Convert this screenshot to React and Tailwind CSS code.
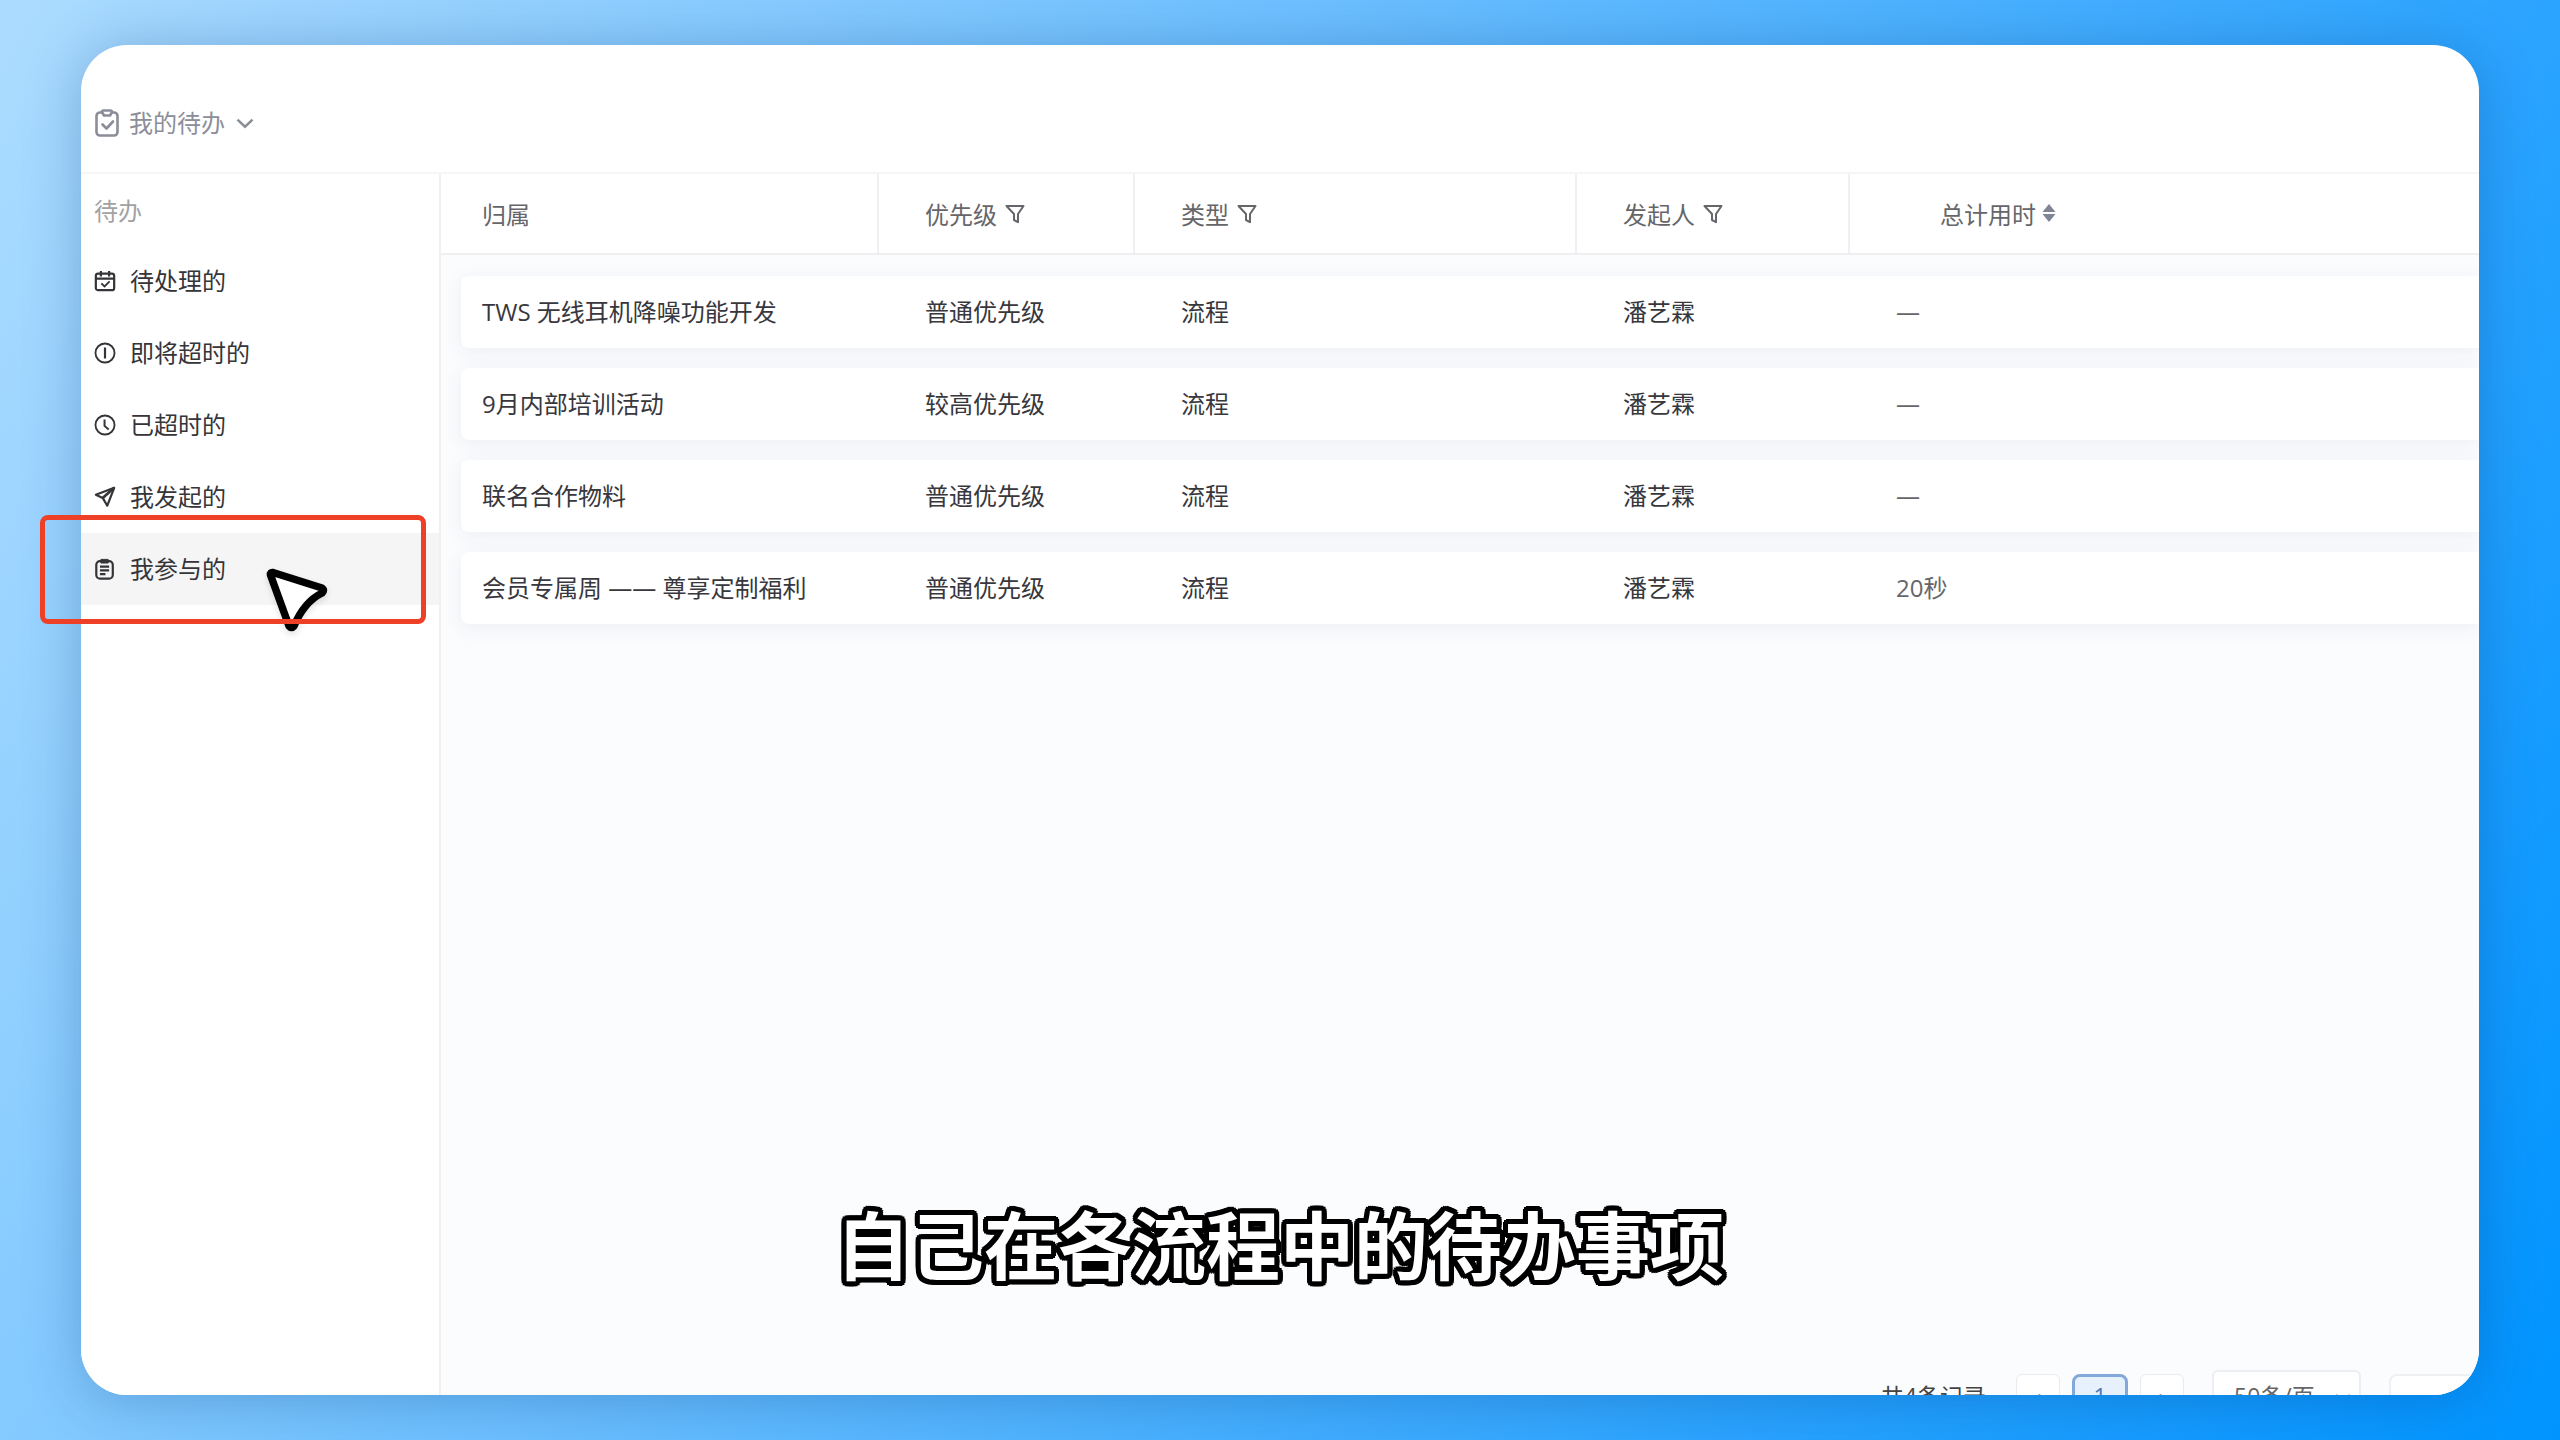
import React, { useState } from "react";

const FONT = "font-['Open_Sans','Noto_Sans_CJK_SC',sans-serif]";

const iconProps = {
  viewBox: "0 0 24 24",
  fill: "none",
  stroke: "currentColor",
  "aria-hidden": true,
};

const TodoIcon = () => (
  <svg {...iconProps} viewBox="0 0 24 28" strokeWidth="2.6" strokeLinejoin="round" className="h-7 w-6 shrink-0">
    <rect x="1.500" y="3.500" width="21" height="23" rx="3.500" />
    <path d="M7 3q0-1.500 1.500-1.500h7q1.500 0 1.500 1.500l-2 3.500H9z" fill="#fff" />
    <path d="M7.500 15.500l4 4 6.500-7" strokeLinecap="round" />
  </svg>
);

const CalendarIcon = () => (
  <svg {...iconProps} strokeWidth="2.4" className="h-[22px] w-[22px]">
    <rect x="2" y="4" width="20" height="18" rx="2.5" />
    <path d="M2 9.5h20M7.5 1v6M16.5 1v6" />
    <path d="M8 14.5l3.5 3.5 5.5-5.5" strokeWidth="2" />
  </svg>
);

const SoonIcon = () => (
  <svg {...iconProps} strokeWidth="2" className="h-[22px] w-[22px]">
    <circle cx="12" cy="12" r="10.4" />
    <path d="M12 6v12" strokeWidth="2.4" />
  </svg>
);

const ClockIcon = () => (
  <svg {...iconProps} strokeWidth="2" className="h-[22px] w-[22px]">
    <circle cx="12" cy="12" r="10.4" />
    <path d="M11.5 6v7l4.5 4" strokeWidth="2.2" />
  </svg>
);

const SendIcon = () => (
  <svg {...iconProps} strokeWidth="2.4" strokeLinejoin="round" className="h-[22px] w-[22px]">
    <path d="M22 2L2 9.500l7.500 3.500 5 8.500z" />
    <path d="M22 2L9.500 13" strokeWidth="3" />
  </svg>
);

const ClipboardIcon = () => (
  <svg {...iconProps} strokeWidth="2.4" className="h-[22px] w-[22px]">
    <rect x="2.5" y="3.5" width="18" height="19" rx="4" />
    <path d="M7.5 1.5h8v4h-8z" fill="currentColor" strokeWidth="1" />
    <path d="M6.500 9.500h10M6.500 13.500h10M6.500 17.500h6" strokeWidth="2.4" />
  </svg>
);

const FilterIcon = () => (
  <svg viewBox="0 0 20 20" fill="none" stroke="currentColor" strokeWidth="2" strokeLinejoin="round" aria-hidden="true" className="h-5 w-5">
    <path d="M1.5 2h17l-5.500 8v8.200l-4-2.200V10z" />
  </svg>
);

const SortIcon = () => (
  <svg viewBox="0 0 14 18" fill="currentColor" aria-hidden="true" className="h-[18px] w-[14px]">
    <path d="M7 0l6.500 8H.5zM7 18l6.500-8H.5z" />
  </svg>
);

const menu = [
  { name: "待处理的", Icon: CalendarIcon },
  { name: "即将超时的", Icon: SoonIcon },
  { name: "已超时的", Icon: ClockIcon },
  { name: "我发起的", Icon: SendIcon },
  { name: "我参与的", Icon: ClipboardIcon },
];

const rows = [
  { id: 1, name: "TWS 无线耳机降噪功能开发", level: "普通优先级", type: "流程", owner: "潘艺霖", time: "—" },
  { id: 2, name: "9月内部培训活动", level: "较高优先级", type: "流程", owner: "潘艺霖", time: "—" },
  { id: 3, name: "联名合作物料", level: "普通优先级", type: "流程", owner: "潘艺霖", time: "—" },
  { id: 4, name: "会员专属周 —— 尊享定制福利", level: "普通优先级", type: "流程", owner: "潘艺霖", time: "20秒" },
];

const HeadCell = ({ label, filter }) => (
  <th scope="col" className="flex items-center gap-2 border-r-2 border-[#f0f0f2] pl-[46px] pt-0.5 font-normal">
    {label}
    {filter && (
      <button type="button" aria-label={`筛选${label}`} className="pb-0.5">
        <FilterIcon />
      </button>
    )}
  </th>
);

const Sidebar = ({ active, onSelect }) => (
  <nav className="w-[360px] shrink-0 border-r-2 border-[#f0f0f1] bg-white">
    <h2 className="flex h-[71px] items-center pl-[13px] pt-0.5 text-[#a2a2a2]">待办</h2>
    <ul>
      {menu.map(({ name, Icon }) => (
        <li key={name}>
          <button
            type="button"
            onClick={() => onSelect(name)}
            className={`flex h-[72px] w-full items-center gap-3.5 pl-[13px] text-left text-[#353539] ${
              active === name ? "bg-[#f5f5f6]" : ""
            }`}
          >
            <Icon />
            <span>{name}</span>
          </button>
        </li>
      ))}
    </ul>
  </nav>
);

const TaskTable = () => (
  <table className="block text-left">
    <thead className="block border-b-2 border-[#efeff1] bg-white text-[#66666a]">
      <tr className="grid h-[79px] grid-cols-[438px_256px_442px_273px_1fr]">
        <th scope="col" className="flex items-center border-r-2 border-[#f0f0f2] pl-[41px] pt-0.5 font-normal">
          归属
        </th>
        <HeadCell label="优先级" filter />
        <HeadCell label="类型" filter />
        <HeadCell label="发起人" filter />
        <th scope="col" className="flex items-center gap-1.5 pl-[90px] pt-0.5 font-normal">
          总计用时
          <button type="button" aria-label="排序总计用时" className="pb-1 text-[#7f8594]">
            <SortIcon />
          </button>
        </th>
      </tr>
    </thead>
    <tbody className="flex flex-col gap-5 pl-5 pt-[21px] text-[#37373d]">
      {rows.map((row) => (
        <tr
          key={row.id}
          className="grid h-[72px] grid-cols-[416px_256px_442px_273px_1fr] items-center rounded-l-lg bg-white shadow-[0_4px_20px_rgba(40,50,90,0.07)]"
        >
          <td className="pl-[21px]">{row.name}</td>
          <td className="pl-12">{row.level}</td>
          <td className="pl-12">{row.type}</td>
          <td className="pl-12">{row.owner}</td>
          <td className="pl-12 text-[#66666a]">{row.time}</td>
        </tr>
      ))}
    </tbody>
  </table>
);

// The pager sits half below the panel edge
const Pager = () => (
  <div className="-mb-[27px] mt-auto flex h-[52px] shrink-0 items-center justify-end text-[23px] text-[#444]">
    <span className="mr-[30px]">共4条记录</span>
    <button type="button" aria-label="上一页" className="mr-3 h-11 w-11 rounded-md border border-[#e9ebf0] bg-white text-[#999]">
      ‹
    </button>
    <button type="button" className="mr-3 h-11 w-14 rounded-lg border-3 border-[#84a8da] bg-[#e6f1fd] text-[#4c78b8]">
      1
    </button>
    <button type="button" aria-label="下一页" className="mr-7 h-11 w-11 rounded-md border border-[#e9ebf0] bg-white text-[#999]">
      ›
    </button>
    <div className="relative mr-7">
      <select
        aria-label="每页条数"
        className="h-[52px] w-[149px] appearance-none rounded-md border-2 border-[#eceef2] bg-white pl-5 text-[#666]"
      >
        <option>50条/页</option>
      </select>
      <svg {...iconProps} strokeWidth="2" className="pointer-events-none absolute right-2 top-[18px] h-5 w-5 text-[#999]">
        <path d="M4 8l8 8 8-8" />
      </svg>
    </div>
    <input aria-label="跳转页码" className="h-11 w-[90px] rounded-lg border-2 border-[#eef0f3] bg-white" />
  </div>
);

const App = () => {
  const [active, setActive] = useState("我参与的");

  return (
    <div
      lang="zh-CN"
      className={`relative h-screen overflow-hidden bg-[linear-gradient(120deg,#acdcff_0%,#6bbfff_40%,#2ba4ff_75%,#0094ff_100%)] px-[81px] py-[45px] text-2xl leading-8 ${FONT}`}
    >
      <div className="flex h-full flex-col overflow-hidden rounded-[46px] bg-white shadow-[0_4px_56px_rgba(0,50,110,0.28)]">
        <header className="flex h-[129px] shrink-0 items-center border-b-2 border-[#f6f6f7] pl-[14px] pt-7">
          <button type="button" className="flex items-center gap-2.5 text-[#8b8e99]">
            <TodoIcon />
            <span>我的待办</span>
            <svg {...iconProps} strokeWidth="3" className="h-5 w-5">
              <path d="M3 8l9 8.500 9-8.500" />
            </svg>
          </button>
        </header>
        <div className="flex min-h-0 grow">
          <Sidebar active={active} onSelect={setActive} />
          <main className="flex min-w-0 grow flex-col bg-[#fbfcfe]">
            <TaskTable />
            <Pager />
          </main>
        </div>
      </div>

      {/* Mouse pointer */}
      <svg viewBox="0 0 62 66" aria-hidden="true" className="absolute left-[266px] top-[568px] h-[66px] w-[62px] drop-shadow-md">
        <path
          d="M7 4.500L56 20q3 2 0 5Q38 34 28 58q-2.500 3-5 0L4.500 7q-.5-3 2.500-2.500z"
          fill="#fff"
          stroke="#000"
          strokeWidth="7.5"
          strokeLinejoin="round"
        />
      </svg>
      <div className="pointer-events-none absolute left-10 top-[515px] h-[109px] w-[386px] rounded-lg border-5 border-[#ee3f27]" />

      <p className="absolute inset-x-0 bottom-[140px] text-center text-[74px] font-bold leading-[108px] text-white [text-shadow:5px_0_#000,5px_2px_#000,4px_4px_#000,2px_5px_#000,0_5px_#000,-2px_5px_#000,-4px_4px_#000,-5px_2px_#000,-5px_0_#000,-5px_-2px_#000,-4px_-4px_#000,-2px_-5px_#000,0_-5px_#000,2px_-5px_#000,4px_-4px_#000,5px_-2px_#000]">
        自己在各流程中的待办事项
      </p>
    </div>
  );
};

export default App;
